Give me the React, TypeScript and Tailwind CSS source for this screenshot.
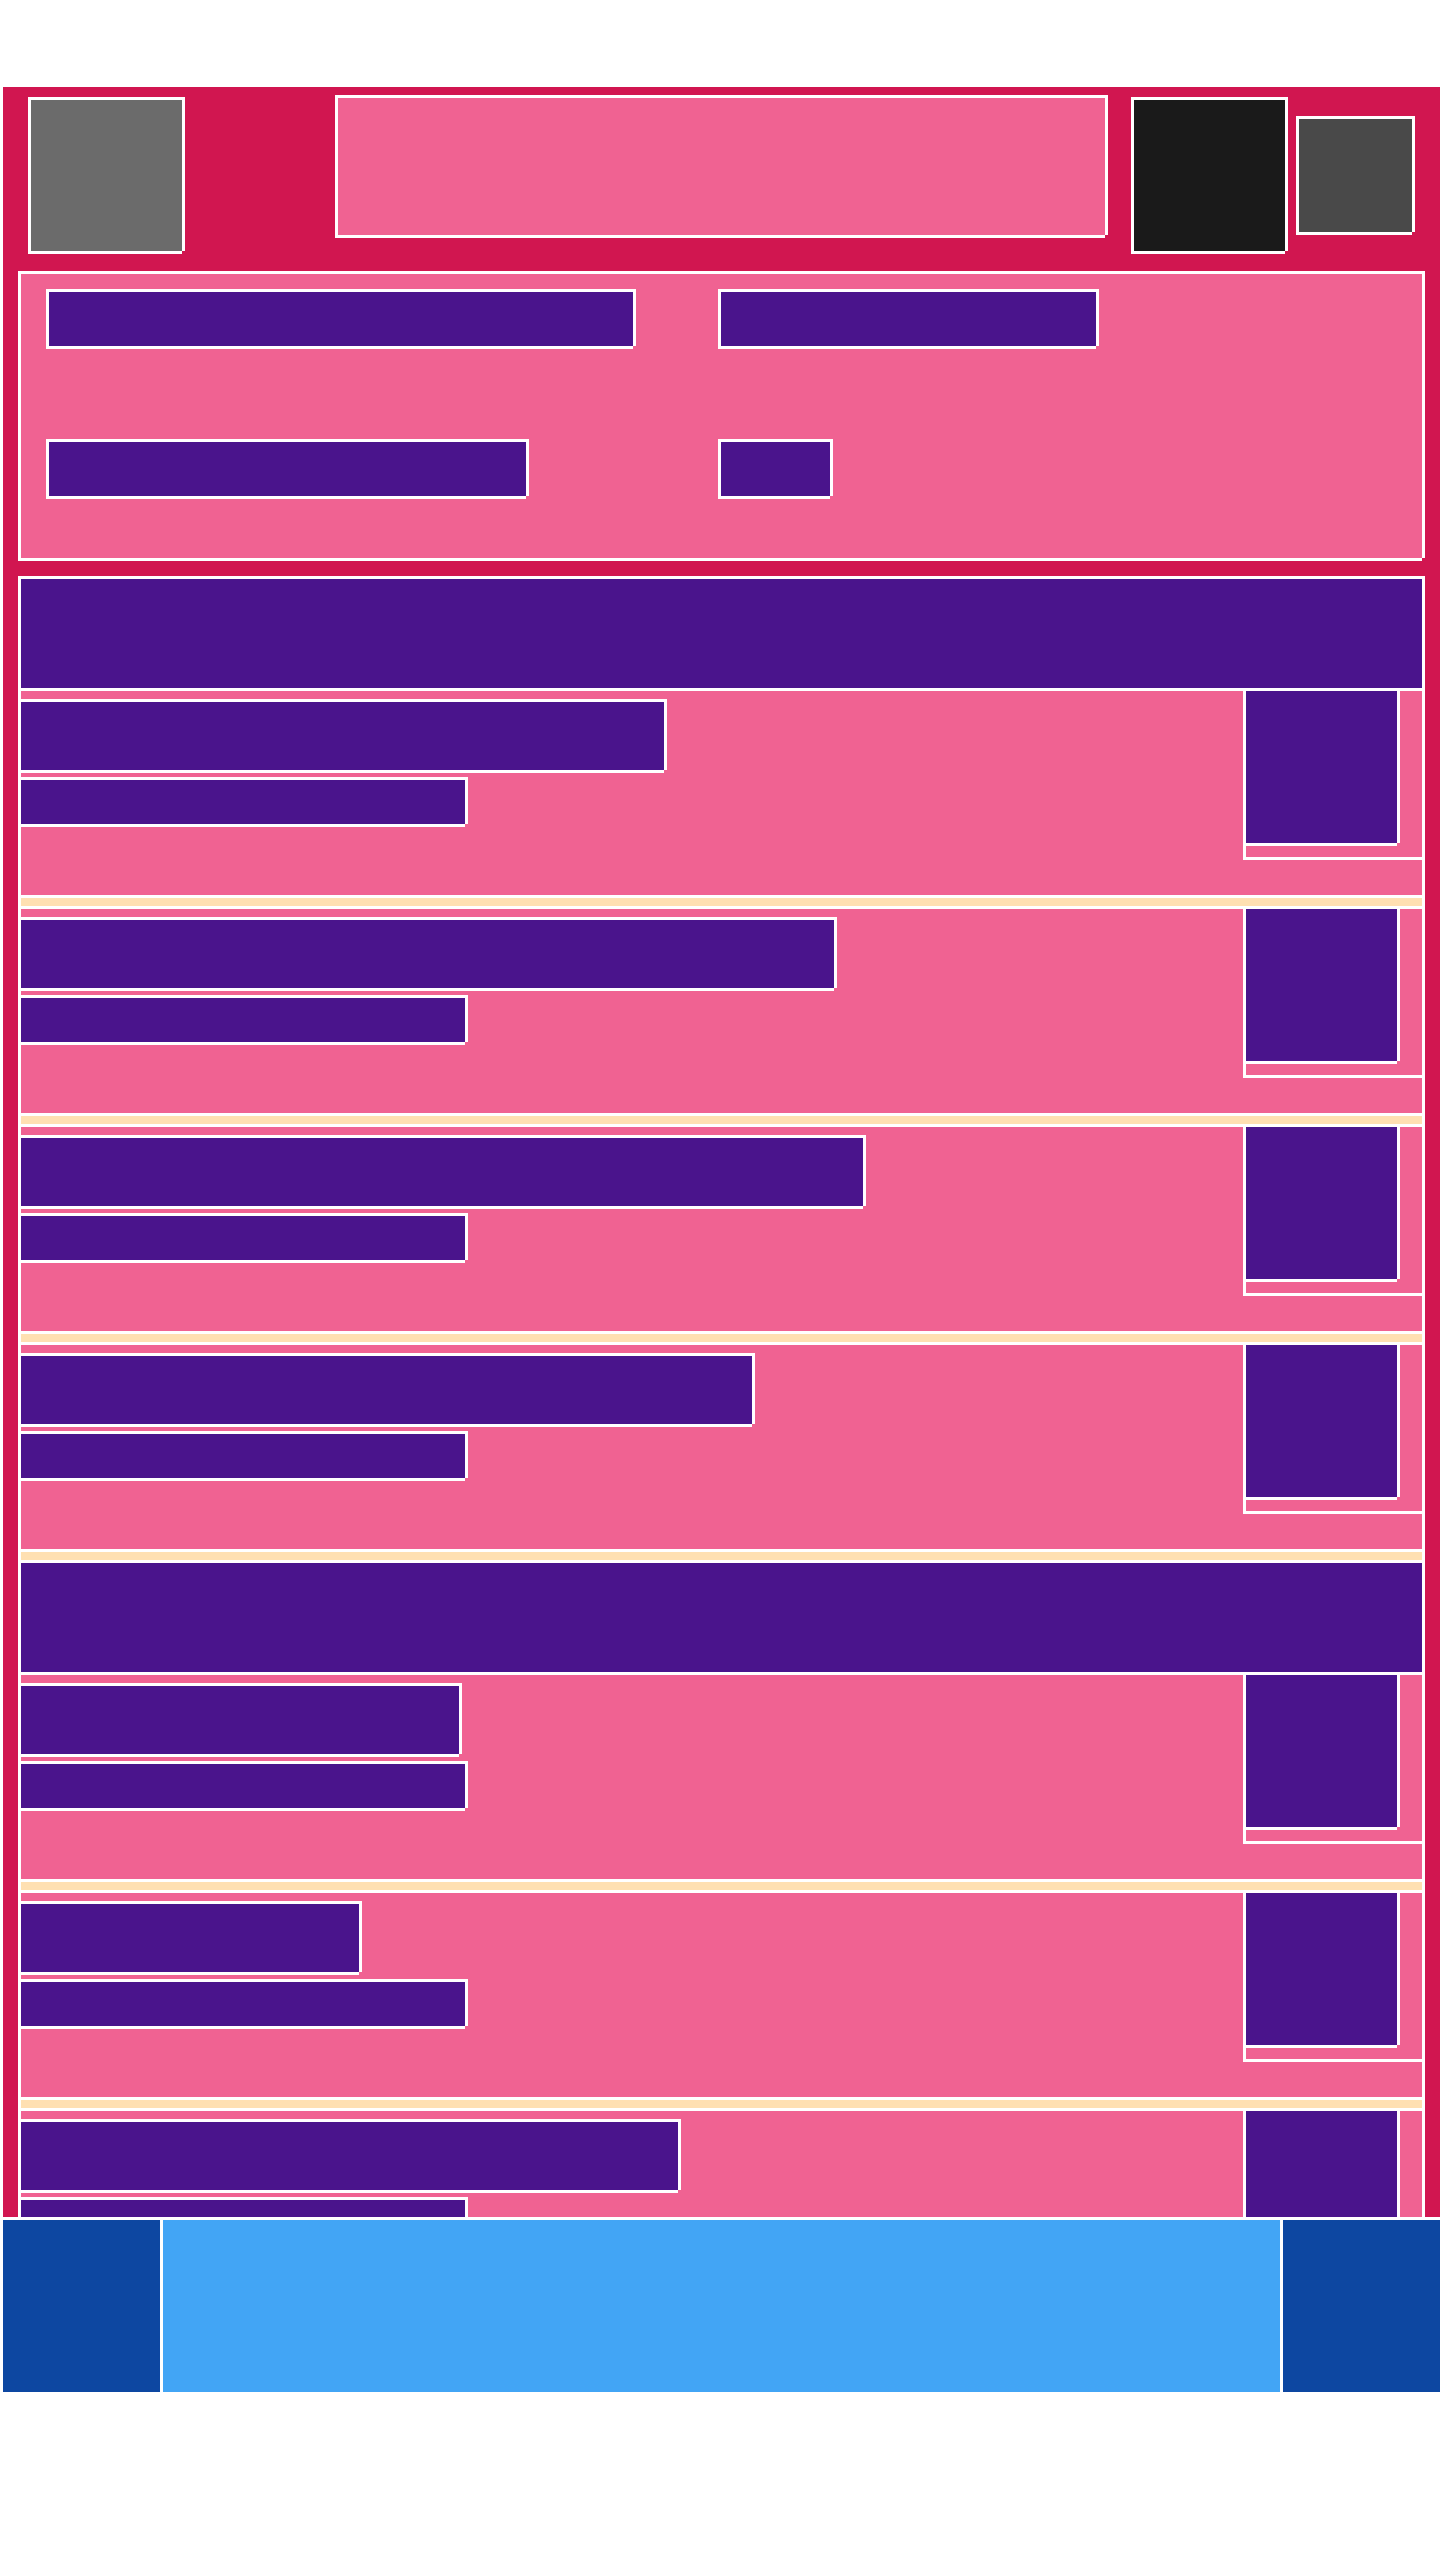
const PINK = "bg-[#f06292]";
const PURPLE = "bg-[#4a148c]";

// white outline with the small missing corner at bottom right
const outline =
  "relative border-white after:absolute after:-right-[3px] after:-bottom-[3px] after:size-[3px]";

function Input({ width }: { width: string }) {
  return (
    <div
      className={`${outline} h-[60px] justify-self-start border-[3px] ${PURPLE} after:bg-[#f06292] ${width}`}
    />
  );
}

function Row({ titleWidth }: { titleWidth: string }) {
  return (
    <div className={`mb-2 flex h-[210px] justify-between border-y-[3px] border-white ${PINK}`}>
      <div className="flex flex-col gap-1 pt-2">
        <div
          className={`${outline} h-[74px] border-y-[3px] border-r-[3px] ${PURPLE} after:bg-[#f06292] ${titleWidth}`}
        />
        <div
          className={`${outline} h-[50px] w-[447px] border-y-[3px] border-r-[3px] ${PURPLE} after:bg-[#f06292]`}
        />
      </div>
      <div className="h-[169px] w-[179px] border-b-[3px] border-l-[3px] border-white">
        <div
          className={`${outline} h-[155px] w-[154px] border-r-[3px] border-b-[3px] ${PURPLE} after:bg-[#f06292]`}
        />
      </div>
    </div>
  );
}

function SectionHeader() {
  return <div className={`h-[112px] border-t-[3px] border-white ${PURPLE}`} />;
}

export default function App() {
  return (
    <div className="bg-white pt-[87px] pb-[168px] pl-[3px]">
      <main className="h-[2130px] overflow-hidden bg-[#d11650]">
        <header className="flex h-[184px] items-start pl-[25px]">
          <div className={`${outline} mt-[10px] size-[157px] border-[3px] bg-[#6b6b6b] after:bg-[#d11650]`} />
          <div className={`${outline} mt-2 ml-[150px] h-[143px] w-[773px] border-[3px] ${PINK} after:bg-[#d11650]`} />
          <div className={`${outline} mt-[10px] ml-[23px] size-[157px] border-[3px] bg-[#1a1a1a] after:bg-[#d11650]`} />
          <div className={`${outline} mt-[29px] ml-2 size-[119px] border-[3px] bg-[#494949] after:bg-[#d11650]`} />
        </header>

        <div className="px-[15px]">
          <section
            className={`${outline} mb-[15px] grid h-[290px] grid-cols-[672px_1fr] content-start gap-y-[90px] border-[3px] pt-[15px] pl-[25px] ${PINK} after:bg-[#d11650]`}
          >
            <Input width="w-[590px]" />
            <Input width="w-[381px]" />
            <Input width="w-[483px]" />
            <Input width="w-[115px]" />
          </section>

          <div className="border-x-[3px] border-white bg-[#ffe0b2]">
            <SectionHeader />
            <Row titleWidth="w-[646px]" />
            <Row titleWidth="w-[816px]" />
            <Row titleWidth="w-[845px]" />
            <Row titleWidth="w-[734px]" />
            <SectionHeader />
            <Row titleWidth="w-[441px]" />
            <Row titleWidth="w-[341px]" />
            <Row titleWidth="w-[660px]" />
          </div>
        </div>
      </main>

      <footer className="flex h-[175px] border-t-[3px] border-white">
        <div className="w-[157px] bg-[#0d47a1]" />
        <div className="flex-1 border-x-[3px] border-white bg-[#42a5f5]" />
        <div className="w-[157px] bg-[#0d47a1]" />
      </footer>
    </div>
  );
}
